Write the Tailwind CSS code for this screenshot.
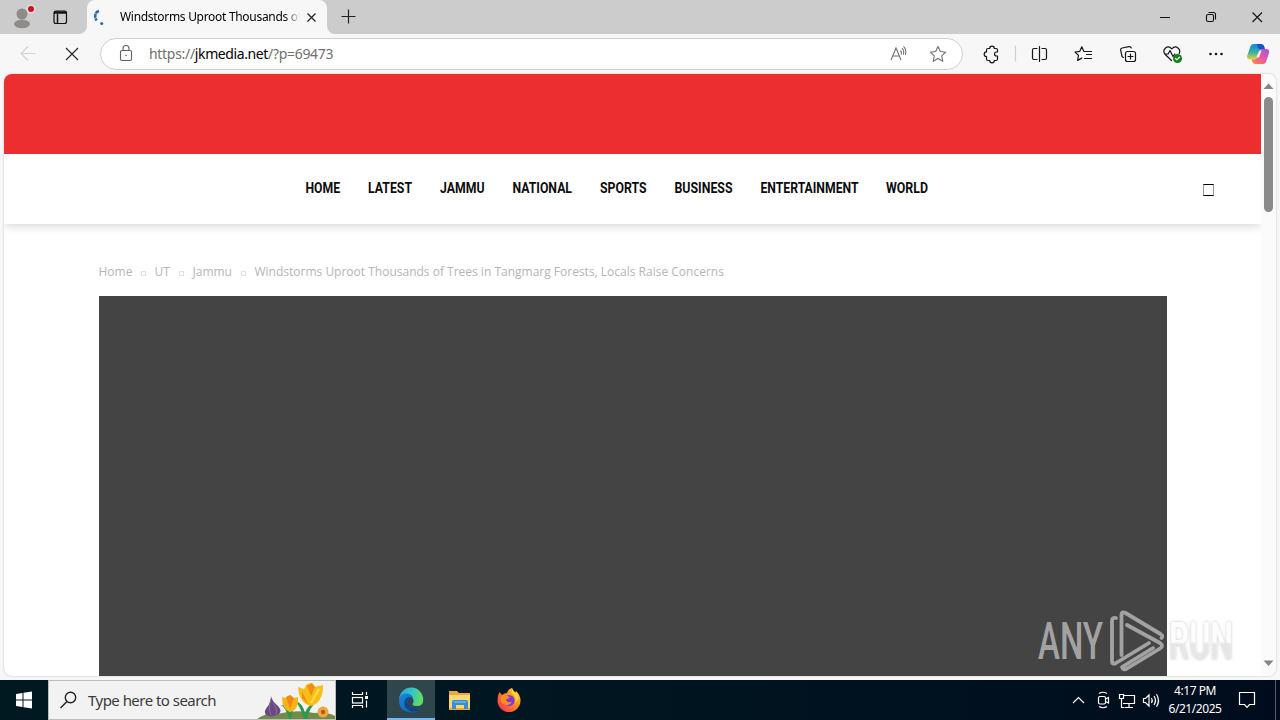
<!DOCTYPE html>
<html lang="en">
<head>
  <meta charset="UTF-8">
  <title>Windstorms Uproot Thousands of Trees</title>
  <meta name="viewport" content="width=device-width, initial-scale=1.0">
  <script src="https://cdn.jsdelivr.net/npm/@tailwindcss/browser@4"></script>
</head>
<body class="relative w-[1280px] h-[720px] overflow-hidden flex flex-col bg-[#f7f7f7] font-['Noto_Sans',sans-serif] text-black">

  <!-- Tab strip -->
  <header class="h-[34px] shrink-0 flex bg-linear-to-b from-[#cccccc] from-50% to-[#f7f7f7] to-50%">
    <div class="w-[87px] flex items-center bg-[#cccccc] rounded-br-lg">
      <svg class="w-[87px] h-[34px]" viewBox="0 0 87 34" fill="none">
        <circle cx="22" cy="14" r="5.5" fill="#8f8b88"/>
        <ellipse cx="22" cy="24" rx="8" ry="4.2" fill="#8f8b88"/>
        <circle cx="31" cy="9" r="4.5" fill="#dedede"/>
        <circle cx="31" cy="9" r="3" fill="#d20f1e"/>
        <rect x="54" y="11" width="12.5" height="12.5" rx="2" stroke="#111" stroke-width="1.2"/>
        <path d="M54 13h12.500M54 12h12.500M57.500 14v9" stroke="#111" stroke-width="1.500"/>
      </svg>
    </div>
    <div class="w-[240px] h-[34px] bg-[#cccccc]">
      <div class="w-[240px] h-[34px] flex items-center bg-[#f7f7f7] rounded-t-lg">
        <svg class="w-[33px] h-[34px] shrink-0" viewBox="0 0 33 34" fill="none">
          <path d="M12 11Q8.200 12 8.200 16.500Q8.200 18.500 9.700 20.500" stroke="#2a6fa8" stroke-width="2.600" stroke-dasharray="4 .6"/>
          <circle cx="14.700" cy="23.500" r="1.600" fill="#2a6fa8"/>
        </svg>
        <div class="w-[180px] overflow-hidden whitespace-nowrap text-[12px] leading-[18px] tracking-[-0.3px] bg-linear-to-r from-black from-90% to-[#f7f7f7] to-100% bg-clip-text text-transparent">Windstorms Uproot Thousands of</div>
        <svg class="w-[22px] h-[34px]" viewBox="0 0 22 34" fill="none"><path d="M7.500 13.500l8 8m0-8l-8 8" stroke="#222" stroke-width="1.200"/></svg>
      </div>
    </div>
    <div class="grow flex bg-[#cccccc] rounded-bl-lg">
      <svg class="w-[42px] h-[34px]" viewBox="0 0 42 34" fill="none"><path d="M14.500 16.500h14M21.500 9.500v14" stroke="#222" stroke-width="1.200"/></svg>
      <svg class="w-[138px] h-[34px] ml-auto" viewBox="1142 0 138 34" fill="none" stroke="#111" stroke-width="1.100">
        <path d="M1160 17.500h10M1252.500 12.500l9.500 9.500m0-9.500l-9.500 9.500"/>
        <rect x="1206.500" y="14.500" width="7" height="7" rx="1.500"/>
        <path d="M1208.500 12.500h5q2 0 2 2v5"/>
      </svg>
    </div>
  </header>

  <!-- Toolbar -->
  <div class="h-10 shrink-0 flex items-center">
    <svg class="w-[100px] h-10" viewBox="0 34 100 40" fill="none">
      <path d="M35.500 53.500H21M28 46.500l-7 7 7 7" stroke="#d2d2d2" stroke-width="1.100"/>
      <path d="M66 48l12 12m0-12l-12 12" stroke="#222" stroke-width="1.100"/>
    </svg>
    <div class="w-[863px] h-8 flex items-center rounded-full bg-white border border-[#d0d0d0]">
      <svg class="w-12 h-[30px]" viewBox="101 39 48 30" fill="none" stroke="#5f5f5f" stroke-width="1.100">
        <rect x="120.500" y="50.500" width="11" height="10" rx="1.500"/>
        <path d="M123 50v-1.500a3 3 0 0 1 6 0V50"/>
        <circle cx="126" cy="55.500" r=".7" fill="#444" stroke="none"/>
      </svg>
      <div class="text-[14px] leading-5 tracking-[-0.3px] text-[#707070] whitespace-nowrap">https://<span class="text-black tracking-[-0.4px]">jkmedia.net</span>/?p=69473</div>
      <svg class="w-[81px] h-[30px] ml-auto" viewBox="881 39 81 30" fill="none" stroke="#707070" stroke-width="1.100">
        <path d="M891 60l5-12 5 12M892.700 56h6.600M900.500 50.500q1.500 1.500.7 4M902 48.200q2.500 2.500 1.300 6.500M903.500 46.300q3.500 3.500 1.900 8.500"/>
        <path d="M938 46.500l2.300 5 5.400.7-4 3.700 1.100 5.400-4.800-2.700-4.800 2.700 1.100-5.400-4-3.700 5.400-.7z" stroke-linejoin="round"/>
      </svg>
    </div>
    <svg class="w-[317px] h-10" viewBox="963 34 317 40" fill="none" stroke="#161616" stroke-width="1.200" stroke-linejoin="round" stroke-linecap="round">
      <path d="M988 48.500h1.700a2.300 2.300 0 0 1 4.600 0H996q1.500 0 1.500 1.500v2h-1a2 2 0 0 0 0 4h1V59q0 1.500-1.500 1.500h-1.700a2.300 2.300 0 0 1-4.600 0H988q-1.500 0-1.500-1.500v-2.500a2.300 2.300 0 0 1 0-4.600V50q0-1.500 1.500-1.500z"/>
      <path d="M1015.500 46v15" stroke="#cfcfcf"/>
      <path d="M1039.500 46.500v15M1037 48.500h-3q-1.500 0-1.500 1.500v8q0 1.500 1.500 1.500h3M1042 48.500h3q1.500 0 1.500 1.500v8q0 1.500-1.500 1.500h-3"/>
      <path d="M1091.500 51.500h-5.500l-2.200-.2-2-4.500-2 4.500-4.800.7 3.500 3.400-.9 5 4.200-2.300M1086.500 54.500h5M1084.500 58.500h7"/>
      <rect x="1125.500" y="51.500" width="10" height="10" rx="2"/>
      <path d="M1130.500 54v5M1128 56.500h5M1123.500 57.500q-1.300-.2-1.600-1.500l-1.200-5.600q-.4-2 1.500-2.400l6.600-1.400q2-.3 2.500 1.400"/>
      <path d="M1171.500 60.500l-6.500-6.300q-2.500-3.400.3-6 3.300-2.700 6.500.6 3.200-3.300 6.400-.6 2.600 2.300 1 5.200M1165 54h3.200l1.800-3.500 3 6 1.800-2.500"/>
      <circle cx="1177.500" cy="58.500" r="4.500" fill="#108018" stroke="none"/>
      <path d="M1175.500 58.500l1.400 1.400 2.600-2.800" stroke="#fff"/>
      <g fill="#161616" stroke="none"><circle cx="1210.500" cy="54" r="1.300"/><circle cx="1216" cy="54" r="1.300"/><circle cx="1221.500" cy="54" r="1.300"/></g>
      <defs>
        <linearGradient id="copA" x1="0" y1="0" x2="0" y2="1"><stop offset="0" stop-color="#1687df"/><stop offset=".55" stop-color="#35b3a2"/><stop offset="1" stop-color="#f5cf2c"/></linearGradient>
        <linearGradient id="copB" x1="1" y1="0" x2="0" y2="1"><stop offset="0" stop-color="#a64fe0"/><stop offset=".5" stop-color="#e85aa0"/><stop offset="1" stop-color="#ff8a3c"/></linearGradient>
      </defs>
      <g stroke="none">
        <path d="M1253.500 44h7.500q2.500 0 3.200 2.500l.8 3h-3q-2.500 0-3.200 2l-2 5.500q-.8 2.500-3 2.500h-3.800q-3.700 0-2.700-4l2.700-8q1-3.500 3.500-3.500z" fill="url(#copA)"/>
        <path d="M1256.500 44h4.500q2.500 0 3.200 2.500l.8 3h-4q-2 0-2.700-1.600z" fill="#1856c4"/>
        <path d="M1262 49h4q4 0 3 4l-2.500 7.500q-1 3.500-3.500 3.500h-7.500q-2.500 0-3.200-2.500l-.8-2h2.500q2.300 0 3-2.200l1.800-5.800q.7-2.500 3.200-2.500z" fill="url(#copB)"/>
        <path d="M1259.500 50.500h2l-2.500 7h-2.500z" fill="#f7f7f7"/>
      </g>
    </svg>
  </div>

  <!-- Page -->
  <main class="relative mx-1 h-[602px] shrink-0 flex bg-white rounded-lg overflow-hidden shadow-[0_0_2px_#b5b5b5]">
    <div class="w-[1257px] flex flex-col overflow-hidden">
      <div class="relative z-10 h-20 shrink-0 bg-[#ec2e2f]"></div>
      <div class="h-[70px] shrink-0 flex items-center justify-between pl-[301px] pr-[47px] bg-white shadow-[0_2px_9px_rgba(0,0,0,0.17)]">
        <nav>
          <svg class="w-[630px] h-[30px]" viewBox="305 174 630 30" font-family="Roboto, sans-serif" font-weight="700" font-size="14" fill="#0c0c0c">
            <text x="305.500" y="193" textLength="34.500" lengthAdjust="spacingAndGlyphs">HOME</text>
            <text x="368" y="193" textLength="44" lengthAdjust="spacingAndGlyphs">LATEST</text>
            <text x="440" y="193" textLength="44.500" lengthAdjust="spacingAndGlyphs">JAMMU</text>
            <text x="512.500" y="193" textLength="59.500" lengthAdjust="spacingAndGlyphs">NATIONAL</text>
            <text x="600" y="193" textLength="46.500" lengthAdjust="spacingAndGlyphs">SPORTS</text>
            <text x="674.500" y="193" textLength="58" lengthAdjust="spacingAndGlyphs">BUSINESS</text>
            <text x="760.500" y="193" textLength="98" lengthAdjust="spacingAndGlyphs">ENTERTAINMENT</text>
            <text x="886" y="193" textLength="42" lengthAdjust="spacingAndGlyphs">WORLD</text>
          </svg>
        </nav>
        <div class="w-[11px] h-3 mt-[2px] border-x border-y border-x-[#999] border-y-black"></div>
      </div>
      <div class="h-[72px] shrink-0 pt-6 pl-[94.5px] flex items-center text-[12px] leading-4 text-[#b5b5b5] font-['Open_Sans',sans-serif] whitespace-nowrap">
        <span class="w-[42px]">Home</span><i class="w-[5px] h-[5px] mt-[3px] mr-[9px] border border-[#e2e2e2]"></i>
        <span class="w-[24px]">UT</span><i class="w-[5px] h-[5px] mt-[3px] mr-[9px] border border-[#e2e2e2]"></i>
        <span class="w-[48px]">Jammu</span><i class="w-[5px] h-[5px] mt-[3px] mr-[9px] border border-[#e2e2e2]"></i>
        <span>Windstorms Uproot Thousands of Trees in Tangmarg Forests, Locals Raise Concerns</span>
      </div>
      <div class="w-[1068px] grow ml-[95px] bg-[#444444]"></div>
    </div>
    <div class="w-[15px] flex flex-col items-center bg-[#fbfbfb]">
      <svg class="w-[15px] h-[23px]" viewBox="0 0 15 23"><path d="M7.500 9.500l5 5.500h-10z" fill="#858585"/></svg>
      <div class="w-[9px] h-[115px] rounded-full bg-[#8b8b8b]"></div>
      <svg class="w-[15px] h-[23px] mt-auto" viewBox="0 0 15 23"><path d="M7.500 13l5-5.500h-10z" fill="#858585"/></svg>
    </div>
  </main>

  <!-- Watermark over the page -->
  <svg class="absolute left-[1030px] top-[590px] w-[220px] h-[90px]" viewBox="1030 590 220 90" fill="none">
    <defs>
      <filter id="wm" x="-10%" y="-20%" width="120%" height="140%"><feDropShadow dx="0" dy="0" stdDeviation="1.500" flood-color="#000" flood-opacity=".25"/></filter>
      <linearGradient id="run" x1="0" y1="0" x2="0" y2="1"><stop offset=".5" stop-color="#fdfdfd"/><stop offset=".55" stop-color="#e6e6e6"/></linearGradient>
    </defs>
    <g font-family="Roboto, sans-serif" font-size="52" font-weight="500">
      <text x="1038" y="659" textLength="65" lengthAdjust="spacingAndGlyphs" fill="#a2a2a2">ANY</text>
      <text x="1169" y="659" textLength="64" lengthAdjust="spacingAndGlyphs" fill="url(#run)" filter="url(#wm)">RUN</text>
    </g>
    <g stroke="#a2a2a2" stroke-width="3.800" stroke-linejoin="round" stroke-linecap="round">
      <path d="M1116 618q-4-1-4 3v40q0 4 4 2l33-20"/>
      <path d="M1121.500 655v-40q0-4 4-2l35 21q3 2 1 4"/>
      <path d="M1127 625l33 18q4 3 0 5.500l-33 20q-4 2-5-1.500l31-19"/>
    </g>
  </svg>

  <!-- Taskbar -->
  <footer class="mt-auto h-10 shrink-0 flex bg-linear-to-r from-[#001820] via-[#001520] to-[#000c1d] text-white">
    <svg class="w-12 h-10" viewBox="0 680 48 40"><path d="M16 694l6.500-1v6.500H16zM23.500 692.800l8.500-1.300v8H23.500zM16 700.500h6.500v6.500l-6.500-1zM23.500 700.500h8.500v8l-8.500-1.300z" fill="#fff"/></svg>
    <div class="w-72 flex items-center bg-[#f2f2f2] border border-[#bdbdbd] text-[#3b3b3b]">
      <svg class="w-[39px] h-[38px]" viewBox="49 681 39 38" fill="none" stroke="#222" stroke-width="1.400"><circle cx="70.500" cy="697.500" r="5.200"/><path d="M67 701.500l-6.500 6.500"/></svg>
      <span class="text-[15px] leading-5 tracking-[-0.53px] whitespace-nowrap">Type here to search</span>
      <svg class="w-[79px] h-[38px] ml-auto" viewBox="256 681 79 38">
        <path d="M257 719q8-6 20-5 20-5 37-1 14-1 21 3v3z" fill="#738b49"/>
        <path d="M289 719q-3-11-8-14 7 0 9 8 0-8 6-11-4 8-5 17zM304 719q-4-14-10-19 9 3 11 13 3-9 13-13-9 8-11 19z" fill="#31964d"/>
        <path d="M271 696q1 5 6 9 6 6 2 9-7 4-13 1-3-4 2-9 3-4 3-10z" fill="#684a83"/>
        <path d="M271 699q-3 10 0 16M273 703q5 6 3 12" stroke="#8b68a0" fill="none"/>
        <path d="M282 697l4 1 4-3 4 3 4-1q1 13-8 15-8-2-8-15z" fill="#f7b516"/>
        <path d="M286 697l4 12 4-11-4-3z" fill="#f08a12"/>
        <path d="M298 687l6 2 3-5 5-1 3 4 8-2q0 18-12 21-12-3-13-19z" fill="#f9bd16"/>
        <path d="M307 686l5-3 3 4-4 9zM302 691l6 13-6-6z" fill="#ef8d16"/>
        <path d="M319 689l-8 14" stroke="#ffe150" stroke-width="2"/>
        <circle cx="323" cy="712" r="5.500" fill="#f2a640"/><circle cx="323" cy="712" r="2.200" fill="#b75b12"/>
      </svg>
    </div>
    <svg class="w-[51px] h-10" viewBox="336 680 51 40" fill="none" stroke="#fff" stroke-width="1.200">
      <path d="M352.500 692v2.500h10V692M352.500 708v-2.500h10v2.500M366.500 692v3M366.500 700.500v7"/><rect x="352.500" y="697.500" width="10" height="5.500"/><path d="M365 696h3v3h-3z" fill="#fff" stroke="none"/>
    </svg>
    <div class="w-12 h-10 bg-[#30464d] border-b-2 border-[#76b9ed] flex justify-center">
      <svg class="w-12 h-10 shrink-0" viewBox="387 680 48 40">
        <defs>
          <linearGradient id="edA" x1="0" y1="0" x2="1" y2=".2"><stop offset="0" stop-color="#2aa4df"/><stop offset=".55" stop-color="#33c5c4"/><stop offset="1" stop-color="#62dc68"/></linearGradient>
          <linearGradient id="edB" x1="0" y1="0" x2="1" y2="1"><stop offset="0" stop-color="#1b88dc"/><stop offset="1" stop-color="#0c59a4"/></linearGradient>
        </defs>
        <path d="M399.200 699a12 12 0 0 1 24 1q0 6-6.200 6-4.500 0-4.500-2 1.500-1.500 1-4-1.500-5-7.500-5-5 0-6.800 4z" fill="url(#edA)"/>
        <path d="M399.100 700q.5-6.500 7-6.500 5 0 7 4-4-1-5.500 3-1 5 4 8 4.500 2 9-.5-4 4.500-10 4.500-11.500-1-11.500-12.500z" fill="url(#edB)"/>
        <path d="M406.500 698q-4 5-.5 10 4 4.500 9 3.500 4-1 5.500-3.500-5 2-9-.5-5-3-4-7.500 1-2.500 3-3-2.500-.5-4 1z" fill="#104689"/>
      </svg>
    </div>
    <svg class="w-[98px] h-10" viewBox="435 680 98 40">
      <path d="M449 691h8l2 2h11v17h-21z" fill="#e9a93b"/><path d="M449 695h21v13h-21z" fill="#fad776"/>
      <path d="M452 709v-7q0-2 2-2h12q2 0 2 2v7h-4v-4h-8v4z" fill="#368fd0"/><path d="M454 702h12" stroke="#68b8e8" stroke-width="1.500"/>
      <defs><linearGradient id="ff" x1="1" y1="0" x2="0" y2="1"><stop offset="0" stop-color="#ffe23c"/><stop offset=".45" stop-color="#ff8b22"/><stop offset="1" stop-color="#f5235e"/></linearGradient></defs>
      <path d="M499.500 692l2.500 3q2-2 5-2 1-4 5-5 0 4 3 5l1-2q4.500 4 4.500 9.500a11.500 11.500 0 0 1-23 0q0-5 2-8.500z" fill="url(#ff)"/>
      <circle cx="509" cy="700.500" r="5.500" fill="#7b3bd2"/>
      <path d="M502 696q3-2 6 0l2 2q-4 .5-4 2.500 2 3 6 1-2 4-6 3.500-5-1-5.500-6z" fill="#ff8d22"/>
      <path d="M512 688q-1 4 2 7 3 3 1 8 5-4 2-9-4-3-5-6z" fill="#ffd93a"/>
    </svg>
    <svg class="w-[100px] h-10 ml-auto" viewBox="1066 680 100 40" fill="none" stroke="#fff" stroke-width="1.200">
      <path d="M1073 703l5.500-5.500 5.500 5.500"/>
      <rect x="1098.500" y="696.500" width="7" height="7.500" rx="1.500"/><path d="M1105.500 699l3-1.500v5.500l-3-1.500M1099 693.500q4-2.500 8 0M1099 706.500q4 2.500 8 0"/>
      <path d="M1124 695.500h10.500v8H1123M1129 704v3.500M1125 707.500h8M1119.500 694.500h4v4h-4zM1121.500 699v8.500h3"/>
      <path d="M1143.500 698.500h2l3.500-3.500v11l-3.500-3.500h-2zM1151.500 698q1.500 2.500 0 5M1154 696q3 4.500 0 9M1156.500 694.200q4 6.300 0 12.600"/>
    </svg>
    <div class="w-[58px] pt-[2px] text-center text-[12px] leading-[18px] tracking-[-0.45px] whitespace-nowrap"><div>4:17 PM</div><div>6/21/2025</div></div>
    <svg class="w-[56px] h-10" viewBox="1224 680 56 40" fill="none" stroke="#fff" stroke-width="1.200"><path d="M1239.500 692.500h15v12h-5l-2.500 2.800-2.500-2.800h-5z"/><path d="M1275.500 680v40" stroke="#536070" stroke-width="1"/></svg>
  </footer>
</body>
</html>
